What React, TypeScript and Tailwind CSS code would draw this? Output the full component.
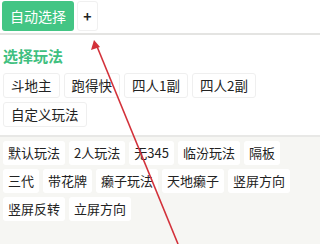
import React from 'react'

const topModes = ['斗地主', '跑得快', '四人1副', '四人2副', '自定义玩法']
const rules = ['默认玩法', '2人玩法', '无345', '临汾玩法', '隔板', '三代', '带花牌', '癞子玩法', '天地癞子', '竖屏方向', '竖屏反转', '立屏方向']

const font = { fontFamily: '"Noto Sans CJK SC", "Noto Sans", sans-serif' }

export default function App() {
  return (
    <div className="relative w-[320px] h-[244px] overflow-hidden bg-[#f6f6f3]" style={font}>
      {/* top toolbar */}
      <div className="flex items-center gap-[3px] px-[2px] pt-[1px] pb-[2px] bg-white border-b-2 border-[#e4e4e2]">
        <button className="h-[30px] px-[8px] rounded-[3px] bg-[#43c584] text-white text-[14px] leading-none">
          自动选择
        </button>
        <button className="h-[30px] w-[21px] rounded-[3px] bg-white border border-[#f0f0f0] text-[14px] font-bold text-[#222] leading-none">
          +
        </button>
      </div>

      {/* mode section */}
      <div className="bg-white px-[3px] pt-[10px] pb-[8px] border-b-2 border-[#e8e8e6]">
        <h2 className="text-[15px] font-bold text-[#3fc080] leading-[22px] mb-[6px]">选择玩法</h2>
        <div className="flex flex-wrap gap-x-[4px] gap-y-[4px]">
          {topModes.map(m => (
            <span key={m} className="h-[25px] px-[7px] flex items-center rounded-[3px] border border-[#efefef] bg-white text-[13.5px] text-[#222]">
              {m}
            </span>
          ))}
        </div>
      </div>

      {/* rule options */}
      <div className="flex flex-wrap gap-x-[4px] gap-y-[4px] px-[3px] pt-[4px]">
        {rules.map(r => (
          <span key={r} className="h-[24px] px-[5px] flex items-center rounded-[3px] bg-white text-[13px] text-[#222]">
            {r}
          </span>
        ))}
      </div>

      {/* annotation arrow */}
      <svg className="absolute inset-0 pointer-events-none" width="320" height="244">
        <line x1="96" y1="44" x2="178" y2="244" stroke="#d3313a" strokeWidth="1.6" />
        <polygon points="94,40 91,50 100,47" fill="#d3313a" />
      </svg>
    </div>
  )
}
